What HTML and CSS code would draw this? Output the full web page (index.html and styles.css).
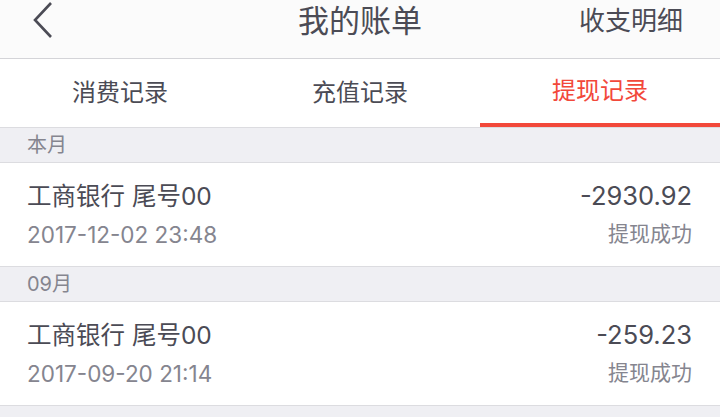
FILE: index.html
```html
<!DOCTYPE html>
<html lang="zh-CN">
<head>
  <meta charset="UTF-8" />
  <meta name="viewport" content="width=device-width, initial-scale=1.0"/>
  <title>我的账单</title>
  <link rel="stylesheet" href="styles.css">
</head>
<body>
  <!-- Top Bar -->
  <header class="nav">
    <a class="back" href="#">
      <svg width="24" height="40" viewBox="0 0 24 40">
        <polyline points="19,3 3,20 19,37" fill="none" stroke="#4b4b55" stroke-width="2.6"/>
      </svg>
    </a>
    <h1>我的账单</h1>
    <a class="detail" href="#">收支明细</a>
  </header>

  <!-- Tabs -->
  <nav class="tabs">
    <div class="tab">消费记录</div>
    <div class="tab">充值记录</div>
    <div class="tab active">提现记录</div>
  </nav>

  <!-- Records -->
  <div class="month">本月</div>
  <div class="record">
    <div class="left">
      <div class="bank">工商银行 尾号00</div>
      <div class="time">2017-12-02 23:48</div>
    </div>
    <div class="right">
      <div class="amount">-2930.92</div>
      <div class="status">提现成功</div>
    </div>
  </div>

  <div class="month">09月</div>
  <div class="record">
    <div class="left">
      <div class="bank">工商银行 尾号00</div>
      <div class="time">2017-09-20 21:14</div>
    </div>
    <div class="right">
      <div class="amount">-259.23</div>
      <div class="status">提现成功</div>
    </div>
  </div>
</body>
</html>
```

FILE: styles.css
```css
body {
  margin: 0;
  font-family: Inter, "Noto Sans CJK SC", sans-serif;
  background: #efeff3;
  color: #4b4b55;
}

/* Top Bar */
.nav {
  height: 58px;
  background: #fbfbfb;
  border-bottom: 1px solid #d4d4d8;
  display: grid;
  grid-template-columns: 1fr auto 1fr;
  align-items: start;
}

.back {
  display: flex;
  margin-left: 32px;
}

.nav h1 {
  margin: 0;
  font-size: 31px;
  font-weight: normal;
  line-height: 41px;
}

.detail {
  justify-self: end;
  margin-right: 37px;
  font-size: 26px;
  line-height: 42px;
  color: #4b4b55;
  text-decoration: none;
}

/* Tabs */
.tabs {
  display: flex;
  height: 68px;
  background: #fff;
  border-bottom: 1px solid #dcdce0;
}

.tab {
  flex: 1;
  text-align: center;
  font-size: 24px;
  line-height: 68px;
  box-sizing: border-box;
}

.tab.active {
  color: #f2483a;
  border-bottom: 4px solid #f2483a;
  line-height: 64px;
}

/* Records */
.month {
  height: 34px;
  line-height: 34px;
  padding-left: 27px;
  font-size: 20px;
  color: #85858f;
  border-bottom: 1px solid #dcdce0;
}

.record {
  height: 103px;
  background: #fff;
  border-bottom: 1px solid #dcdce0;
  display: flex;
  justify-content: space-between;
  padding: 0 28px 0 27px;
}

.left, .right {
  padding-top: 16px;
}

.right {
  text-align: right;
}

.bank {
  font-size: 24.5px;
  line-height: 34px;
}

.time {
  font-size: 22.5px;
  line-height: 34px;
  margin-top: 5px;
  color: #85858f;
}

.amount {
  font-size: 25.5px;
  line-height: 34px;
}

.status {
  font-size: 21px;
  line-height: 34px;
  margin-top: 4px;
  color: #85858f;
}
```
